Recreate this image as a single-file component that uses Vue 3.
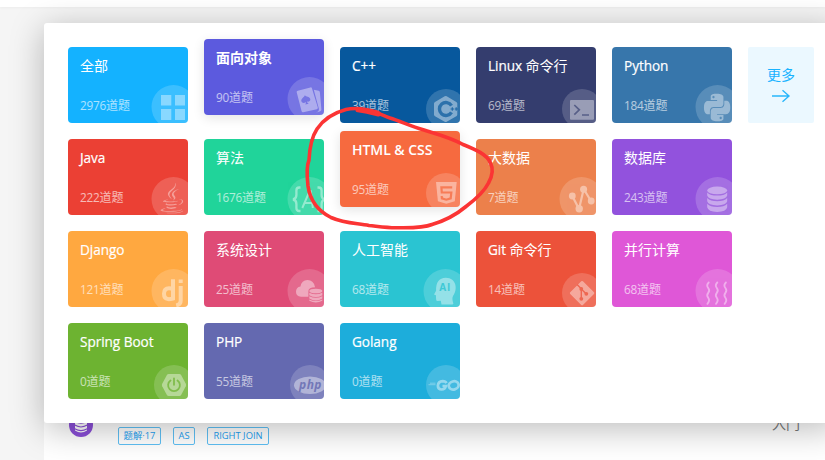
<script setup>
// Each title and count is split into runs so Latin and CJK can be sized separately.
const runs = (text) => text.match(/[\u4e00-\u9fff]+|[^\u4e00-\u9fff]+/g).map((t) => ({ t, cjk: /[\u4e00-\u9fff]/.test(t) }))

const cards = [
  { title: '全部', count: 2976, color: '#14b2ff', icon: 'all' },
  { title: '面向对象', count: 90, color: '#5c5ade', icon: 'oop', active: true },
  { title: 'C++', count: 39, color: '#07589d', icon: 'cpp', small: true },
  { title: 'Linux 命令行', count: 69, color: '#343d6e', icon: 'linux', small: true },
  { title: 'Python', count: 184, color: '#3776ab', icon: 'python' },
  { title: 'Java', count: 222, color: '#eb4034', icon: 'java' },
  { title: '算法', count: 1676, color: '#20d49a', icon: 'algo' },
  { title: 'HTML & CSS', count: 95, color: '#f66a3f', icon: 'html', small: true, active: true },
  { title: '大数据', count: 7, color: '#ec804b', icon: 'bigdata' },
  { title: '数据库', count: 243, color: '#9252dd', icon: 'db' },
  { title: 'Django', count: 121, color: '#ffa840', icon: 'django' },
  { title: '系统设计', count: 25, color: '#df4b76', icon: 'cloud' },
  { title: '人工智能', count: 68, color: '#2ac4d2', icon: 'ai' },
  { title: 'Git 命令行', count: 14, color: '#ec523a', icon: 'git', small: true },
  { title: '并行计算', count: 68, color: '#df57d7', icon: 'parallel' },
  { title: 'Spring Boot', count: 0, color: '#6db331', icon: 'spring', small: true },
  { title: 'PHP', count: 55, color: '#6469b0', icon: 'php', small: true },
  { title: 'Golang', count: 0, color: '#1daddb', icon: 'go', small: true },
].map((c) => ({ ...c, titleRuns: runs(c.title), countRuns: runs(c.count + '道题') }))
</script>

<template>
  <div class="page">
    <header class="topbar"></header>
    <main class="list">
      <div class="row">
        <svg class="avatar" viewBox="0 0 24 24">
          <circle cx="12" cy="12" r="12" fill="#8b4fd8" />
          <g fill="#fff">
            <ellipse cx="12" cy="7" rx="6" ry="2.4" />
            <path d="M6 9q6 3.6 12 0v2.6q-6 3.6-12 0z" />
            <path d="M6 12.8q6 3.6 12 0v2.4q-6 3.6-12 0z" />
            <path d="M6 16.4q6 3.6 12 0v1.2q-6 4-12 0z" />
          </g>
        </svg>
        <div class="tags">
          <span class="tag w1">题解·17</span>
          <span class="tag w2">AS</span>
          <span class="tag w3">RIGHT JOIN</span>
        </div>
        <span class="level">入门</span>
      </div>
    </main>

    <section class="panel">
      <div class="grid">
        <div v-for="c in cards" :key="c.title" class="card" :class="[{ active: c.active }]" :style="{ background: c.color }">
          <div class="title"><span v-for="r in c.titleRuns" :key="r.t" :class="{ cjk: r.cjk }">{{ r.t }}</span></div>
          <div class="count"><span v-for="r in c.countRuns" :key="r.t" :class="{ cjk: r.cjk }">{{ r.t }}</span></div>
          <svg class="art" viewBox="0 0 120 76">
            <circle v-if="c.small" cx="106" cy="62" r="20" fill="#fff" opacity=".17" />
            <circle v-else cx="105.5" cy="60" r="22" fill="#fff" opacity=".17" />

            <g v-if="c.icon === 'all'" class="ink">
              <path d="M93 48h10.3v10.6H93zM107 48h10v10.6h-10zM93 62h10.3v11H93zM107 62h10v11h-10z" />
            </g>
            <g v-else-if="c.icon === 'oop'" class="ink">
              <path fill-rule="evenodd" d="M93.8 51.8l12.6-3.4q1.2-.3 1.6 1l5.8 19.2q.4 1.3-1 1.6l-13.6 3.1q-1.2.3-1.6-1l-4.9-19q-.3-1.2 1.1-1.5zM100.8 56.3c-.5 2-4.1 3.4-3.4 6 .6 2 3 2.2 4.3.7.3 1.2 0 2-.4 2.6l3.4-.9c-.8-.4-1.4-1-1.7-2.2 2 .6 3.9-.8 3.2-2.8-.9-2.2-3.9-1.7-5.400-3.400z" />
              <path d="M109.800 50.800l4.800 1q1.200.300 1.300 1.600l1.500 17.200q0 1.200-1.200 1.600l-4.400 1.600q3.600-1.400 3.100-4z" />
            </g>
            <g v-else-if="c.icon === 'cpp'">
              <path class="ink" d="M104.700 49.300q1-.6 2 0l9.600 5.600q1 .6 1 1.700v10.900q0 1.100-1 1.700l-9.600 5.500q-1 .6-2 0l-9.700-5.500q-1-.6-1-1.700V56.600q0-1.100 1-1.700z" />
              <path d="M111.500 58.600a6.500 6.500 0 1 0 0 6.800" fill="none" :stroke="c.color" stroke-width="3.400" opacity=".7" />
              <path d="M110.600 62h3.400M112.300 60.300v3.400M114.700 62h3M116.200 60.300v3.400" :stroke="c.color" stroke-width="1.100" opacity=".8" />
            </g>
            <g v-else-if="c.icon === 'linux'">
              <rect class="ink" x="94" y="53" width="24" height="19.700" rx="1" />
              <path d="M98.300 58l5 4.800-5 4.800M106 68h7" fill="none" :stroke="c.color" stroke-width="1.700" opacity=".65" />
            </g>
            <g v-else-if="c.icon === 'python'" class="ink" transform="translate(92 46.700) scale(1.090 1.150)">
              <path fill-rule="evenodd" d="M14.250.180l.9.200.730.260.590.300.450.320.340.340.250.340.160.330.100.300.040.260.020.200-.010.130V8.500l-.050.630-.130.550-.210.460-.260.380-.300.310-.330.250-.350.190-.350.140-.330.100-.300.070-.260.040-.210.020H8.770l-.690.050-.590.140-.500.220-.410.270-.330.320-.270.350-.200.360-.150.370-.100.350-.070.320-.040.270-.020.210v3.060H3.170l-.210-.030-.280-.070-.320-.120-.350-.180-.360-.260-.360-.360-.350-.460-.320-.590-.280-.730-.210-.880-.140-1.050-.050-1.230.060-1.220.160-1.040.240-.870.320-.710.360-.570.400-.440.420-.330.420-.240.400-.160.360-.100.320-.050.240-.010h.160l.060.010h8.160v-.830H6.180l-.010-2.750-.020-.370.050-.340.110-.310.170-.280.250-.260.310-.230.380-.200.440-.180.510-.150.580-.120.640-.100.710-.060.770-.040.840-.020 1.270.050zm-6.300 1.980l-.230.330-.080.410.080.410.230.340.330.220.410.090.410-.090.330-.220.230-.340.080-.410-.080-.410-.230-.330-.330-.220-.410-.090-.410.090zm13.090 3.950l.280.060.320.120.350.180.360.270.360.350.350.470.320.590.280.730.210.880.140 1.040.050 1.230-.060 1.230-.160 1.040-.240.860-.320.710-.360.570-.400.450-.420.330-.420.240-.400.160-.360.090-.320.050-.240.020-.160-.010h-8.220v.820h5.840l.010 2.760.020.360-.050.340-.110.310-.170.290-.250.250-.310.240-.380.200-.440.170-.510.150-.580.130-.640.090-.710.070-.770.040-.840.010-1.270-.040-1.070-.140-.900-.200-.730-.250-.590-.300-.450-.330-.340-.340-.250-.340-.160-.330-.100-.300-.040-.250-.020-.200.010-.130v-5.340l.050-.640.130-.540.210-.460.260-.380.300-.320.330-.240.350-.200.350-.140.330-.100.300-.060.260-.040.210-.020.130-.010h5.840l.690-.050.590-.140.500-.210.410-.280.330-.320.270-.350.200-.360.150-.360.100-.350.070-.320.040-.280.020-.210V6.070h2.090l.140.010zm-6.470 14.250l-.230.330-.080.410.080.410.230.330.330.230.410.080.410-.080.330-.230.230-.330.080-.410-.080-.410-.230-.330-.330-.230-.410-.080-.410.080z" />
            </g>
            <g v-else-if="c.icon === 'java'" class="ink" transform="translate(88.600 43.700) scale(1.275)">
              <path d="M8.851 18.560s-.917.534.653.714c1.902.218 2.874.187 4.969-.211 0 0 .552.346 1.321.646-4.699 2.013-10.633-.118-6.943-1.149M8.276 15.933s-1.028.761.542.924c2.032.209 3.636.227 6.413-.308 0 0 .384.389.987.602-5.679 1.661-12.007.130-7.942-1.218M13.116 11.475c1.158 1.333-.304 2.533-.304 2.533s2.939-1.518 1.589-3.418c-1.261-1.772-2.228-2.652 3.007-5.688 0-.001-8.216 2.051-4.292 6.573M19.330 20.504s.679.559-.747.991c-2.712.822-11.288 1.069-13.669.033-.856-.373.750-.890 1.254-.998.527-.114.828-.093.828-.093-.953-.671-6.156 1.317-2.643 1.887 9.580 1.553 17.462-.700 14.977-1.820M9.292 13.210s-4.362 1.036-1.544 1.412c1.189.159 3.561.123 5.770-.062 1.806-.152 3.618-.477 3.618-.477s-.637.272-1.098.587c-4.429 1.165-12.986.623-10.522-.568 2.082-1.006 3.776-.892 3.776-.892M17.116 17.584c4.503-2.340 2.421-4.589.968-4.285-.355.074-.515.138-.515.138s.132-.207.385-.297c2.875-1.011 5.086 2.981-.928 4.562 0-.001.070-.062.090-.118M14.401 0s2.494 2.494-2.365 6.330c-3.896 3.077-.888 4.832-.001 6.836-2.274-2.053-3.943-3.858-2.824-5.539 1.644-2.469 6.197-3.665 5.190-7.627M9.734 23.924c4.322.277 10.959-.153 11.116-2.198 0 0-.302.775-3.572 1.391-3.688.694-8.239.613-10.937.168 0-.001.553.457 3.393.639" />
            </g>
            <g v-else-if="c.icon === 'algo'" class="line" stroke-width="2.300">
              <path d="M96.500 48.500h-1.300q-2.800 0-2.800 3v4.500q0 3.800-3.400 4.500 3.400.700 3.400 4.500v4q0 3 2.800 3h1.300M113.500 48.500h1.300q2.800 0 2.800 3v4.500q0 3.800 3.400 4.500-3.400.700-3.400 4.500v4q0 3-2.800 3h-1.300" />
              <path d="M98.300 69l7.300-16.800h1.200l2 16.800M101 64h7" stroke-width="2" />
            </g>
            <g v-else-if="c.icon === 'html'">
              <path class="ink" d="M96 51h20.700l-1.900 19.300-8.500 2.500-8.400-2.500z" />
              <path d="M112.200 56.300h-10.800l.4 5.200h9.500l-.600 5.800-4.400 1.400-4.400-1.400-.2-2.300" fill="none" :stroke="c.color" stroke-width="2.200" opacity=".75" />
            </g>
            <g v-else-if="c.icon === 'bigdata'" class="glyph">
              <path d="M96.300 57l6.700 13 4.700-20 7.300 12" fill="none" stroke="#fff" stroke-width="2.200" />
              <g fill="#fff"><circle cx="96.300" cy="57" r="3.400" /><circle cx="103.200" cy="69.700" r="3.700" /><circle cx="107.600" cy="50.300" r="3.500" /><circle cx="115.200" cy="62" r="3.400" /></g>
            </g>
            <g v-else-if="c.icon === 'db'" class="ink">
              <ellipse cx="105.200" cy="51.400" rx="10" ry="3.900" />
              <path d="M95.200 53.400q3 3.200 10 3.200t10-3.200v3.200q-1 4.100-10 4.100t-10-4.100zM95.200 59.100q3 3.200 10 3.200t10-3.200v3.200q-1 4.100-10 4.100t-10-4.100zM95.200 64.800q3 3.200 10 3.200t10-3.200v3.500q-1 4.600-10 4.600t-10-4.600z" />
            </g>
            <g v-else-if="c.icon === 'django'" class="line" stroke-width="4">
              <path d="M105 48.300v19.200q-3 .8-5 .6-4-.4-4-5.300 0-5.500 5-5.500 2.200 0 4 .8M112.700 55v14.500q0 4-4.500 5M112.700 48.500v3.500" />
            </g>
            <g v-else-if="c.icon === 'cloud'">
              <g class="glyph" fill="#fff">
                <path d="M97 65.700q-5-.5-5-5 0-4.400 4.500-5.100Q97.500 49 103.500 49q6 0 7.300 6.600l.4.700q-6.800.3-6.800 3.600v5.800z" />
                <ellipse cx="111.800" cy="60" rx="6.500" ry="2.300" />
                <path d="M105.300 61.800q6.500 3 13 0v2.400q-6.500 3.700-13 0zM105.300 65.200q6.500 3 13 0v2.400q-6.500 3.700-13 0zM105.300 68.600q6.500 3 13 0v1.200q-6.500 3.600-13 0z" />
              </g>
            </g>
            <g v-else-if="c.icon === 'ai'">
              <path class="ink" d="M112.500 73.500l-11-.1-.7-3.600-3.400.2q-1.500-.2-1.300-2l-.2-3.700-1.900-.9 2.100-3.600Q95.500 47 105.800 46.700c11 .2 12 12 7.300 18.100q-1.500 2.500.3 8z" />
              <text x="99.200" y="60.200" class="mark ai" :fill="c.color">AI</text>
            </g>
            <g v-else-if="c.icon === 'git'">
              <rect class="ink" x="97.100" y="53.200" width="18" height="18" rx="1.200" transform="rotate(45 106.100 62.200)" />
              <g opacity=".75"><path d="M101.300 53.700l4 4v10.300M105.300 58l4.500 4.500" fill="none" :stroke="c.color" stroke-width="1.400" />
                <g :fill="c.color"><circle cx="105.300" cy="58" r="1.900" /><circle cx="105.300" cy="67.800" r="1.900" /><circle cx="110.300" cy="62.800" r="1.900" /></g></g>
            </g>
            <g v-else-if="c.icon === 'parallel'" class="line" stroke-width="1.800" stroke-linecap="round">
              <path v-for="x in [95.700, 104.300, 112.900]" :key="x" :d="`M${x + 1} 51.500c-2.500 2.500 -1.700 4 -.5 5.500s1.500 3 0 4.800s-1.500 3 0 5s1.500 3.500-.8 6`" />
            </g>
            <g v-else-if="c.icon === 'spring'">
              <path class="ink" d="M100.700 51h10.600q1.200 0 1.800 1l4.700 8.800q.6 1.200 0 2.400l-4.700 8.800q-.6 1-1.800 1h-10.600q-1.200 0-1.800-1l-4.700-8.800q-.6-1.200 0-2.400l4.700-8.800q.6-1 1.800-1z" />
              <path d="M102.500 57.500a5.900 5.900 0 1 0 7 0M106 55.300v6.500" fill="none" :stroke="c.color" stroke-width="1.800" stroke-linecap="round" opacity=".75" />
            </g>
            <g v-else-if="c.icon === 'php'">
              <ellipse class="ink" cx="106" cy="62.200" rx="16" ry="8.800" />
              <text x="95" y="65.700" class="mark php" :fill="c.color" textLength="22.500">php</text>
            </g>
            <g v-else class="line" stroke-width="2.700">
              <path d="M106.500 60.200q-1-2-3.800-2-4.500.2-4.800 4.500 0 3.800 3.800 3.800 3.300 0 4.200-3.500h-3.400" />
              <ellipse cx="113.700" cy="62.400" rx="5" ry="4.100" transform="rotate(-15 113.700 62.400)" />
              <path d="M90 60.200h5.500M88.500 61.700h7" stroke-width=".7" />
            </g>
          </svg>
        </div>
      </div>
      <div class="more">
        <span>更多</span>
        <svg class="arrow" viewBox="0 0 20 14"><path d="M1 7h17M11.500 1.200L18 7l-6.500 5.800" fill="none" stroke="#29b6fb" stroke-width="1.400" /></svg>
      </div>
    </section>

    <svg class="scribble" viewBox="0 0 825 460">
      <g fill="none" stroke="#fb3434" stroke-linecap="round" stroke-linejoin="round">
        <path stroke-width="3.600" d="M378 112.500C367 109 356 107 346 109.500C333 113 323 120 317 129C311 138 309.500 150 309 160C306.500 166 307 177 308 186C310 200 318 211 331 217.500C346 224 358 223 369 225.500C383 227 390 228 397 227.700C412 228 424 228 432 224.500C444 221 457 214 466 206.500C476 199 485 190 488.500 183C493 175 493.500 169 490.500 163C487 154 474 149 463 144.500C452 138 437 134 424 130C410 126 400 121 390 118C382 115 374 111 366 110" />
        <path stroke-width="5" d="M358 109.800L367 111.200L378.500 114" />
      </g>
    </svg>
  </div>
</template>

<style>
body { margin: 0; overflow: hidden; }
</style>

<style scoped>
.page {
  position: relative;
  width: 825px;
  height: 460px;
  overflow: hidden;
  background: #f5f5f5;
  font-family: "Open Sans", "Noto Sans CJK SC", sans-serif;
}
.topbar { height: 7px; background: #fff; box-shadow: 0 1px 3px rgba(0, 0, 0, .04); }
.list {
  box-sizing: border-box;
  height: 413px;
  margin: 40px 0 0 44px;
  padding: 366px 24px 0 25px;
  background: #fff;
}
.row { display: flex; align-items: flex-start; height: 40px; }
.avatar { width: 24px; height: 24px; flex: none; }
.tags { display: flex; gap: 12px; margin: 14px 0 0 25px; }
.tag {
  box-sizing: border-box;
  height: 18px;
  border: 1px solid #5fc0f5;
  border-radius: 2px;
  color: #1ba0f2;
  font-size: 9.400px;
  line-height: 16px;
  text-align: center;
  white-space: nowrap;
}
.w1 { width: 43px; }
.w2 { width: 22px; }
.w3 { width: 62px; }
.level { margin: 1px 1px 0 auto; color: #777; font-size: 14px; line-height: 20px; }
.panel {
  position: absolute;
  z-index: 2;
  left: 44px;
  top: 23px;
  box-sizing: border-box;
  display: flex;
  gap: 16px;
  width: 794px;
  height: 400px;
  padding: 24px;
  border-radius: 3px;
  background: #fff;
  box-shadow: 0 6px 34px rgba(0, 0, 0, .27);
}
.grid {
  display: grid;
  grid-template-columns: repeat(5, 120px);
  grid-auto-rows: 76px;
  gap: 16px;
}
.card {
  position: relative;
  box-sizing: border-box;
  padding: 9px 12px;
  border-radius: 4px;
  overflow: hidden;
  color: #fff;
}
.card.active { transform: translateY(-8px); box-shadow: 0 3px 12px rgba(0, 0, 0, .11); }
.title { height: 20px; font-size: 13.600px; letter-spacing: -.05px; line-height: 20px; white-space: pre; -webkit-text-stroke: .2px #fff; }
.title .cjk { font-size: 14px; letter-spacing: 0; -webkit-text-stroke: 0; }
.active .title { font-weight: 700; -webkit-text-stroke: 0; }
.active .title span:not(.cjk) { font-size: 14px; font-weight: 600; }
.count { height: 18px; margin-top: 20px; font-size: 11.800px; letter-spacing: -.25px; line-height: 18px; opacity: .64; white-space: pre; }
.count .cjk { font-size: 12px; letter-spacing: 0; }
.art { position: absolute; inset: 0; width: 120px; height: 76px; }
.ink { fill: #fff; opacity: .4; }
.glyph { opacity: .42; }
.line { fill: none; stroke: #fff; opacity: .43; }
.mark { font-family: "Open Sans", sans-serif; opacity: .8; }
.ai { font-size: 10px; font-weight: 700; letter-spacing: 1px; }
.php { font-size: 12px; font-weight: 700; font-style: italic; }
.more {
  display: flex;
  flex-direction: column;
  align-items: center;
  box-sizing: border-box;
  width: 66px;
  height: 76px;
  padding-top: 18px;
  border-radius: 2px;
  background: #ebf8ff;
  color: #18b3ff;
  font-size: 14px;
  line-height: 20px;
}
.arrow { width: 20px; height: 14px; margin-top: 4px; }
.scribble { position: absolute; z-index: 3; inset: 0; width: 825px; height: 460px; }
</style>
